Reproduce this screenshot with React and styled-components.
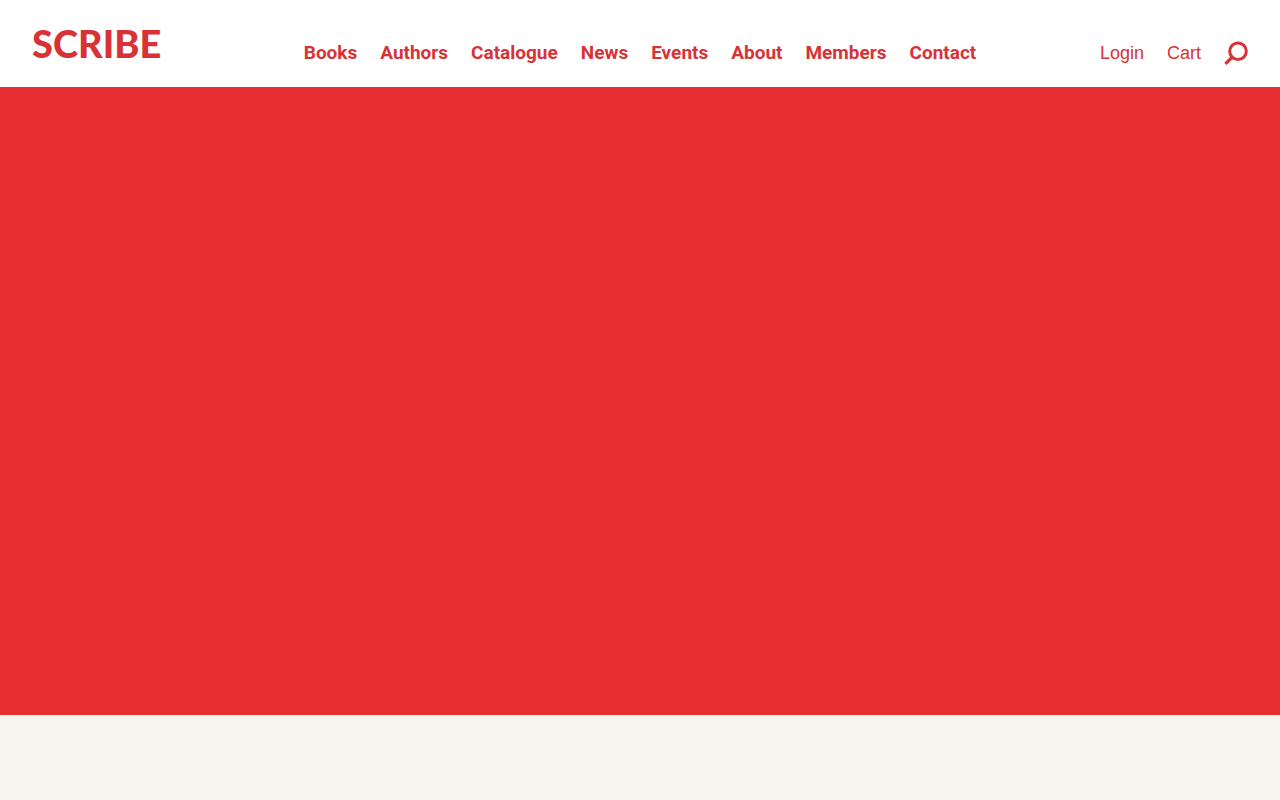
import React from "react";
import styled, { createGlobalStyle, ThemeProvider } from "styled-components";

const theme = {
  colours: {
    red: "#e82e30",
    text: "#d93236",
    white: "#fff",
    cream: "#f8f5ed",
  },
};

const GlobalStyle = createGlobalStyle`
  *, *::before, *::after {
    box-sizing: border-box;
  }

  body {
    margin: 0;
    background: ${({ theme }) => theme.colours.cream};
    color: ${({ theme }) => theme.colours.text};
    font-family: Roboto, "Liberation Sans", sans-serif;
    font-size: 19px;
    line-height: 24px;
  }
`;

const Header = styled.header`
  background: ${({ theme }) => theme.colours.white};
  display: grid;
  grid-template-columns: 1fr auto 1fr;
  align-items: start;
  padding: 20px 32px;
`;

const Logo = styled.a`
  color: ${({ theme }) => theme.colours.text};
  font-family: Lato, sans-serif;
  font-size: 38px;
  font-weight: 900;
  line-height: 47px;
  justify-self: start;
  text-decoration: none;
`;

const Nav = styled.nav`
  display: flex;
  gap: 23px;
  padding-top: 21px;
`;

const NavLink = styled.a`
  color: inherit;
  font-weight: 700;
  text-decoration: none;
`;

const Tools = styled.div`
  display: flex;
  font-family: "Liberation Sans", Arial, sans-serif;
  font-size: 18px;
  gap: 23px;
  justify-self: end;
  padding-top: 21px;
`;

const ToolLink = styled.a`
  color: inherit;
  text-decoration: none;
`;

const SearchButton = styled.button`
  background: none;
  border: 0;
  color: inherit;
  cursor: pointer;
  display: block;
  height: 24px;
  padding: 0;
  width: 24px;
`;

const Hero = styled.section`
  background: ${({ theme }) => theme.colours.red};
  min-height: 628px;
`;

const links = ["Books", "Authors", "Catalogue", "News", "Events", "About", "Members", "Contact"];

const SearchIcon = () => (
  <svg width="24" height="24" viewBox="0 0 24 24" fill="none" stroke="currentColor" strokeWidth="3" aria-hidden="true">
    <circle cx="14" cy="10.2" r="8.3" />
    <path d="M8.4 15.8 1.4 22.8" strokeWidth="3.2" />
  </svg>
);

const App = () => (
  <ThemeProvider theme={theme}>
    <GlobalStyle />
    <Header>
      <Logo href="/">SCRIBE</Logo>
      <Nav aria-label="Main">
        {links.map(link => (
          <NavLink key={link} href={`/${link.toLowerCase()}`}>{link}</NavLink>
        ))}
      </Nav>
      <Tools>
        <ToolLink href="/login">Login</ToolLink>
        <ToolLink href="/cart">Cart</ToolLink>
        <SearchButton type="button" aria-label="Search">
          <SearchIcon />
        </SearchButton>
      </Tools>
    </Header>
    <main>
      <Hero />
    </main>
  </ThemeProvider>
);

export default App;
